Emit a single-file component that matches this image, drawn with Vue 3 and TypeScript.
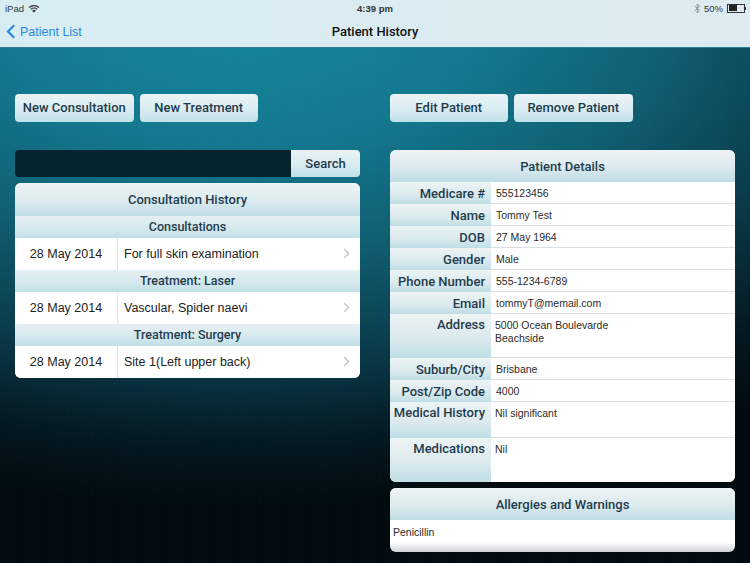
<script setup lang="ts">
interface HistoryRow {
  date: string
  title: string
}
interface HistorySection {
  name: string
  rows: HistoryRow[]
}
interface DetailRow {
  label: string
  lines: string[]
  kind?: 'address' | 'history' | 'meds'
}

const sections: HistorySection[] = [
  { name: 'Consultations', rows: [{ date: '28 May 2014', title: 'For full skin examination' }] },
  { name: 'Treatment: Laser', rows: [{ date: '28 May 2014', title: 'Vascular, Spider naevi' }] },
  { name: 'Treatment: Surgery', rows: [{ date: '28 May 2014', title: 'Site 1(Left upper back)' }] }
]

const details: DetailRow[] = [
  { label: 'Medicare #', lines: ['555123456'] },
  { label: 'Name', lines: ['Tommy Test'] },
  { label: 'DOB', lines: ['27 May 1964'] },
  { label: 'Gender', lines: ['Male'] },
  { label: 'Phone Number', lines: ['555-1234-6789'] },
  { label: 'Email', lines: ['tommyT@memail.com'] },
  { label: 'Address', lines: ['5000 Ocean Boulevarde', 'Beachside'], kind: 'address' },
  { label: 'Suburb/City', lines: ['Brisbane'] },
  { label: 'Post/Zip Code', lines: ['4000'] },
  { label: 'Medical History', lines: ['Nil significant'], kind: 'history' },
  { label: 'Medications', lines: ['Nil'], kind: 'meds' }
]
</script>

<template>
  <div class="screen">
    <header class="nav">
      <div class="status">
        <div class="status-left">
          <span>iPad</span>
          <svg class="wifi" width="12" height="9" viewBox="0 0 12 9">
            <path d="M0.6 3.1a7.7 7.7 0 0 1 10.8 0l-0.9 0.9a6.4 6.4 0 0 0-9 0z" fill="#333" />
            <path d="M2.4 4.9a5.1 5.1 0 0 1 7.2 0l-0.9 0.9a3.8 3.8 0 0 0-5.4 0z" fill="#333" />
            <path d="M4.2 6.7a2.6 2.6 0 0 1 3.6 0L6 8.6z" fill="#333" />
          </svg>
        </div>
        <span class="clock">4:39 pm</span>
        <div class="status-right">
          <svg width="7" height="11" viewBox="0 0 7 11">
            <path d="M0.6 3l5 4.6-2.3 2.4V1l2.3 2.4-5 4.6" fill="none" stroke="#888" stroke-width="0.9" />
          </svg>
          <span>50%</span>
          <div class="battery"><div class="battery-fill"></div></div>
          <div class="battery-tip"></div>
        </div>
      </div>
      <div class="nav-bar">
        <div class="back">
          <svg width="10" height="15" viewBox="0 0 10 15">
            <path d="M8.2 1.2L2 7.5l6.2 6.3" fill="none" stroke="#2b87e0" stroke-width="2.2" />
          </svg>
          <span>Patient List</span>
        </div>
        <div class="nav-title">Patient History</div>
      </div>
    </header>

    <main class="content">
      <section class="col col-left">
        <div class="actions">
          <button class="btn">New Consultation</button>
          <button class="btn">New Treatment</button>
        </div>
        <div class="search">
          <div class="search-input"></div>
          <div class="search-btn">Search</div>
        </div>
        <div class="card history">
          <div class="card-head">Consultation History</div>
          <template v-for="section in sections" :key="section.name">
            <div class="section-head">{{ section.name }}</div>
            <div v-for="row in section.rows" :key="row.title" class="history-row">
              <div class="history-date">{{ row.date }}</div>
              <div class="history-title">{{ row.title }}</div>
              <svg class="chevron" width="7" height="11" viewBox="0 0 7 11">
                <path d="M1 1l4.6 4.5L1 10" fill="none" stroke="#c4c7c9" stroke-width="1.5" />
              </svg>
            </div>
          </template>
        </div>
      </section>

      <section class="col col-right">
        <div class="actions">
          <button class="btn">Edit Patient</button>
          <button class="btn">Remove Patient</button>
        </div>
        <div class="card details">
          <div class="card-head">Patient Details</div>
          <div
            v-for="row in details"
            :key="row.label"
            class="detail-row"
            :class="row.kind"
          >
            <div class="detail-label">{{ row.label }}</div>
            <div class="detail-value">
              <div v-for="line in row.lines" :key="line">{{ line }}</div>
            </div>
          </div>
        </div>
        <div class="card allergies">
          <div class="card-head">Allergies and Warnings</div>
          <div class="allergy-body">Penicillin</div>
        </div>
      </section>
    </main>
  </div>
</template>

<style>
html,
body {
  margin: 0;
  background: #000;
}
</style>

<style scoped>
.screen {
  width: 750px;
  height: 563px;
  overflow: hidden;
  display: flex;
  flex-direction: column;
  font-family: "Liberation Sans", Arial, sans-serif;
  background:
    repeating-linear-gradient(90deg, rgba(255, 255, 255, 0.012) 0 1px, transparent 1px 3px),
    repeating-linear-gradient(0deg, rgba(0, 0, 0, 0.02) 0 1px, transparent 1px 3px),
    radial-gradient(ellipse 860px 520px at 240px -10px, #158aa3 0%, #13788f 30%, #0f6073 50%, #093c4c 70%, #03171f 88%, #010a0e 100%),
    #010a0e;
}

.nav {
  height: 48px;
  flex: none;
  box-sizing: border-box;
  background: linear-gradient(90deg, #d8edf2, #dcebf0);
  border-bottom: 1px solid #2f7f92;
}

.status {
  position: relative;
  height: 16px;
  display: flex;
  justify-content: space-between;
  align-items: center;
  padding: 0 4px 0 5px;
  font-size: 9.5px;
  color: #333;
}

.status-left,
.status-right {
  display: flex;
  align-items: center;
  gap: 4px;
}

.status-right {
  gap: 3px;
}

.clock {
  position: absolute;
  left: 0;
  right: 0;
  text-align: center;
  font-weight: 700;
  font-size: 9.5px;
}

.battery {
  width: 15px;
  height: 6px;
  margin-left: 1px;
  border: 0.5px solid #333;
  padding: 0.5px;
}

.battery-fill {
  width: 8px;
  height: 6px;
  background: #222;
}

.battery-tip {
  width: 1px;
  height: 3px;
  margin-left: -3px;
  background: #333;
}

.nav-bar {
  position: relative;
  height: 31px;
  display: flex;
  align-items: center;
  padding-left: 6px;
}

.back {
  display: flex;
  align-items: center;
  gap: 4px;
  font-size: 12.5px;
  color: #2b87e0;
}

.nav-title {
  position: absolute;
  left: 0;
  right: 0;
  text-align: center;
  font-family: Roboto, "Liberation Sans", sans-serif;
  font-size: 13px;
  font-weight: 500;
  color: #111;
}

.content {
  flex: 1;
  display: flex;
  padding-left: 15px;
}

.col {
  display: flex;
  flex-direction: column;
}

.col-left {
  width: 345px;
}

.col-right {
  width: 345.5px;
  margin-left: 29.5px;
}

.actions {
  display: flex;
  gap: 6px;
  padding-top: 46px;
  margin-bottom: 28px;
}

.btn {
  width: 118.5px;
  height: 28px;
  padding: 0 0 2px;
  border: none;
  border-radius: 4px;
  font-family: Roboto, "Liberation Sans", sans-serif;
  font-size: 13px;
  font-weight: 500;
  color: #1f3c4d;
  background: linear-gradient(#e9f3f6, #d9ecf1 55%, #bfe1e8);
}

.search {
  display: flex;
  height: 27px;
  margin-bottom: 6px;
}

.search-input {
  flex: 1;
  background: #05242e;
  border-radius: 4px 0 0 4px;
}

.search-btn {
  width: 69px;
  display: flex;
  align-items: center;
  justify-content: center;
  border-radius: 0 4px 4px 0;
  font-family: Roboto, "Liberation Sans", sans-serif;
  font-size: 13px;
  font-weight: 500;
  color: #1f3c4d;
  background: linear-gradient(#e9f3f6, #d9ecf1 55%, #bfe1e8);
}

.card {
  border-radius: 6px;
  overflow: hidden;
  background: #fff;
}

.card-head {
  height: 32px;
  display: flex;
  align-items: center;
  justify-content: center;
  font-family: Roboto, "Liberation Sans", sans-serif;
  font-size: 13px;
  font-weight: 500;
  color: #1f3c4d;
  background: linear-gradient(#eef3f5, #dbeaee 55%, #bddde3);
  box-sizing: border-box;
}

.history .card-head {
  height: 33px;
  padding-bottom: 1px;
}

.section-head {
  height: 22px;
  box-sizing: border-box;
  padding-bottom: 2px;
  display: flex;
  align-items: center;
  justify-content: center;
  font-family: Roboto, "Liberation Sans", sans-serif;
  font-size: 12.5px;
  font-weight: 500;
  color: #1f3c4d;
  background: linear-gradient(#e6f0f3, #d6e9ee 55%, #c0e0e6);
}

.history-row {
  position: relative;
  height: 32px;
  display: flex;
  align-items: center;
  font-size: 12.5px;
  color: #222;
  background: #fff;
}

.history-date {
  width: 102px;
  height: 100%;
  display: flex;
  align-items: center;
  justify-content: center;
  border-right: 1px solid #e2e4e5;
}

.history-title {
  padding-left: 6px;
}

.chevron {
  position: absolute;
  right: 10px;
  top: 10px;
}

.details {
  margin-left: 0.5px;
  height: 332px;
}

.detail-row {
  display: flex;
  height: 22px;
  box-sizing: border-box;
}

.detail-row.address {
  height: 44px;
}

.detail-row.history {
  height: 36px;
}

.detail-row.meds {
  height: 44px;
}

.detail-label {
  width: 101px;
  flex: none;
  box-sizing: border-box;
  padding: 4px 6px 0 0;
  text-align: right;
  font-family: Roboto, "Liberation Sans", sans-serif;
  font-size: 13px;
  font-weight: 500;
  line-height: 16px;
  color: #1f3c4d;
  background: linear-gradient(#eef3f5, #d9e9ed 60%, #bfdfe5);
}

.address .detail-label,
.history .detail-label,
.meds .detail-label {
  padding-top: 3px;
}

.detail-value {
  flex: 1;
  box-sizing: border-box;
  padding: 5px 0 0 5px;
  font-size: 10.5px;
  line-height: 13px;
  color: #2a2a2a;
  background: #fff;
  border-bottom: 1px solid #dcdedf;
}

.address .detail-value,
.history .detail-value,
.meds .detail-value {
  padding: 5px 0 0 4px;
}

.meds .detail-value {
  border-bottom: none;
}

.allergies {
  margin: 6px 0 0 0.5px;
  height: 64px;
  background: linear-gradient(#fff 85%, #cfd3d5);
}

.allergy-body {
  padding: 6px 0 0 3px;
  font-size: 10.5px;
  line-height: 13px;
  color: #2a2a2a;
}
</style>
